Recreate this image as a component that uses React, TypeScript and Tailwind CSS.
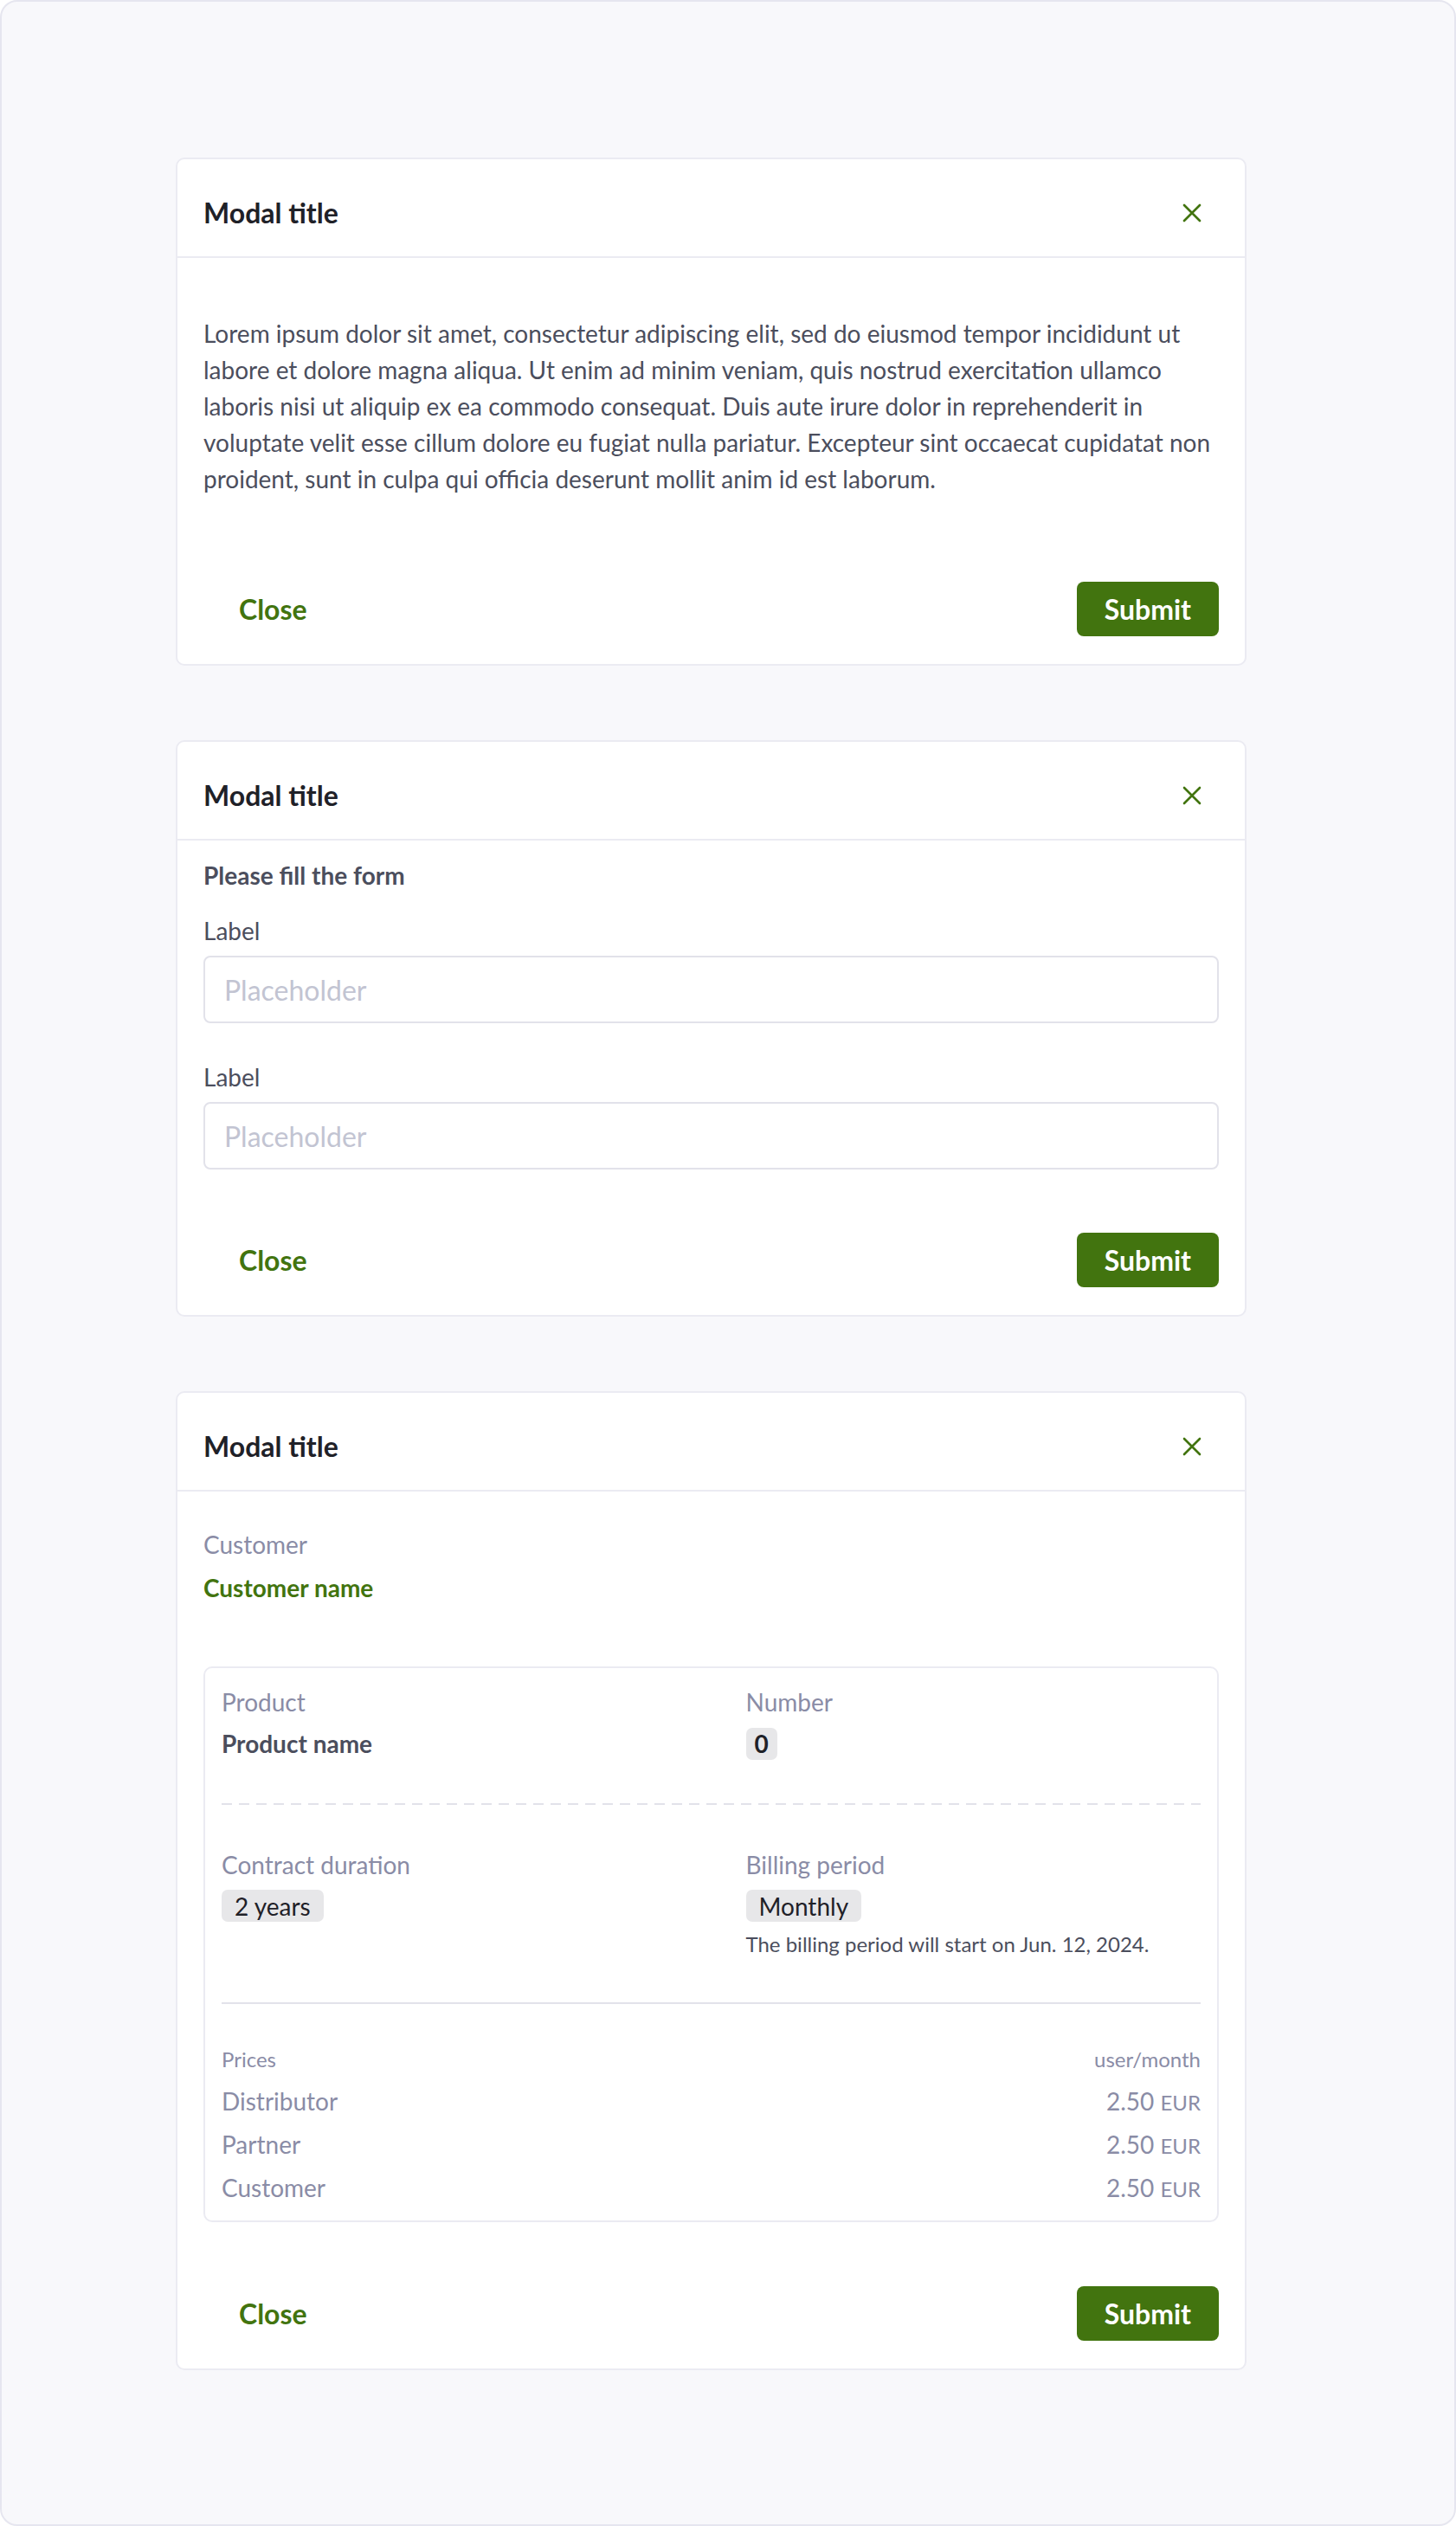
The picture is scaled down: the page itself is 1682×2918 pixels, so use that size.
import React from "react";

const green = "bg-[#42740f]";

function CloseIcon() {
  return (
    <svg width="24" height="24" viewBox="0 0 24 24" fill="none" stroke="#42740f" strokeWidth="2.6" strokeLinecap="round">
      <path d="M3 3L21 21M21 3L3 21" />
    </svg>
  );
}

function ModalHeader() {
  return (
    <div className="flex items-center justify-between h-[114px] pt-[12px] px-[30px] border-b-2 border-[#ebebf2]">
      <h2 className="text-[32px] leading-[40px] font-bold text-[#1f2128]">Modal title</h2>
      <button className="mr-[19px] flex items-center justify-center">
        <CloseIcon />
      </button>
    </div>
  );
}

function ModalFooter({ pt }: { pt: string }) {
  return (
    <div className={`flex items-center justify-between px-[30px] pb-[32px] ${pt}`}>
      <button className="h-[63px] px-[41px] text-[32px] font-bold text-[#42740f]">Close</button>
      <button className={`h-[63px] px-[32px] rounded-[8px] ${green} text-[32px] font-bold text-white`}>
        Submit
      </button>
    </div>
  );
}

function Card({ children }: { children: React.ReactNode }) {
  return (
    <div className="w-[1237px] bg-white border-2 border-[#ebebf2] rounded-[10px]">{children}</div>
  );
}

function Field() {
  return (
    <input
      placeholder="Placeholder"
      className="w-full h-[78px] px-[22px] border-2 border-[#e2e2ea] rounded-[8px] text-[32px] text-[#1f2128] placeholder:text-[#c2c4d2] outline-none"
    />
  );
}

function Badge({ children, bold }: { children: React.ReactNode; bold?: boolean }) {
  return (
    <span
      className={`inline-flex items-center h-[37px] rounded-[7px] bg-[#e7e7e9] text-[28px] text-[#1f2128] ${
        bold ? "font-bold px-[10px]" : "px-[15px]"
      }`}
    >
      {children}
    </span>
  );
}

const prices = [
  { label: "Distributor", value: "2.50" },
  { label: "Partner", value: "2.50" },
  { label: "Customer", value: "2.50" },
];

export default function App() {
  return (
    <div className="w-[1682px] h-[2918px] border-2 border-[#e6e6ef] rounded-[20px] bg-[#f8f8fb] pt-[180px] pl-[201px] flex flex-col gap-[86px] font-['Lato',sans-serif]">
      {/* Simple text modal */}
      <Card>
        <ModalHeader />
        <div className="px-[30px] pt-[66px]">
          <p className="text-[28px] leading-[42px] text-[#4b4e5d]">
            Lorem ipsum dolor sit amet, consectetur adipiscing elit, sed do eiusmod tempor incididunt ut labore et
            dolore magna aliqua. Ut enim ad minim veniam, quis nostrud exercitation ullamco laboris nisi ut aliquip ex
            ea commodo consequat. Duis aute irure dolor in reprehenderit in voluptate velit esse cillum dolore eu
            fugiat nulla pariatur. Excepteur sint occaecat cupidatat non proident, sunt in culpa qui officia deserunt
            mollit anim id est laborum.
          </p>
        </div>
        <ModalFooter pt="pt-[98px]" />
      </Card>

      {/* Form modal */}
      <Card>
        <ModalHeader />
        <div className="px-[30px] pt-[19px]">
          <p className="text-[28px] leading-[42px] font-bold text-[#4b4e5d]">Please fill the form</p>
          <label className="block mt-[22px] text-[28px] leading-[42px] text-[#4b4e5d]">Label</label>
          <div className="mt-[8px]">
            <Field />
          </div>
          <label className="block mt-[41px] text-[28px] leading-[42px] text-[#4b4e5d]">Label</label>
          <div className="mt-[8px]">
            <Field />
          </div>
        </div>
        <ModalFooter pt="pt-[73px]" />
      </Card>

      {/* Summary modal */}
      <Card>
        <ModalHeader />
        <div className="px-[30px] pt-[40px]">
          <p className="text-[28px] leading-[42px] text-[#8a8ca6]">Customer</p>
          <p className="mt-[8px] text-[28px] leading-[42px] font-bold text-[#42740f]">Customer name</p>

          <div className="mt-[70px] border-2 border-[#ebebf2] rounded-[10px] px-[19px] pt-[18px] pb-[17px]">
            <div className="grid grid-cols-2 gap-x-[80px]">
              <div>
                <p className="text-[28px] leading-[42px] text-[#8a8ca6]">Product</p>
                <p className="mt-[6px] text-[28px] leading-[42px] font-bold text-[#4b4e5d]">Product name</p>
              </div>
              <div>
                <p className="text-[28px] leading-[42px] text-[#8a8ca6]">Number</p>
                <div className="mt-[6px] h-[42px] flex items-center">
                  <Badge bold>0</Badge>
                </div>
              </div>
            </div>

            <div className="mt-[48px] h-[2px] bg-[repeating-linear-gradient(90deg,#e2e2ea_0_12px,transparent_12px_20px)]" />

            <div className="mt-[48px] grid grid-cols-2 gap-x-[80px]">
              <div>
                <p className="text-[28px] leading-[42px] text-[#8a8ca6]">Contract duration</p>
                <div className="mt-[8px]">
                  <Badge>2 years</Badge>
                </div>
              </div>
              <div>
                <p className="text-[28px] leading-[42px] text-[#8a8ca6]">Billing period</p>
                <div className="mt-[8px]">
                  <Badge>Monthly</Badge>
                </div>
                <p className="mt-[8px] text-[24px] leading-[36px] text-[#4b4e5d]">
                  The billing period will start on Jun. 12, 2024.
                </p>
              </div>
            </div>

            <div className="mt-[49px] border-t-2 border-[#e2e2ea]" />

            <div className="mt-[46px] flex justify-between text-[24px] leading-[36px] text-[#8a8ca6]">
              <span>Prices</span>
              <span>user/month</span>
            </div>
            <div className="mt-[9px] flex flex-col gap-[8px]">
              {prices.map((p) => (
                <div key={p.label} className="flex justify-between items-baseline h-[42px] text-[#8a8ca6]">
                  <span className="text-[28px] leading-[42px]">{p.label}</span>
                  <span className="text-[28px] leading-[42px]">
                    {p.value} <span className="text-[24px]">EUR</span>
                  </span>
                </div>
              ))}
            </div>
          </div>
        </div>
        <ModalFooter pt="pt-[74px]" />
      </Card>
    </div>
  );
}
